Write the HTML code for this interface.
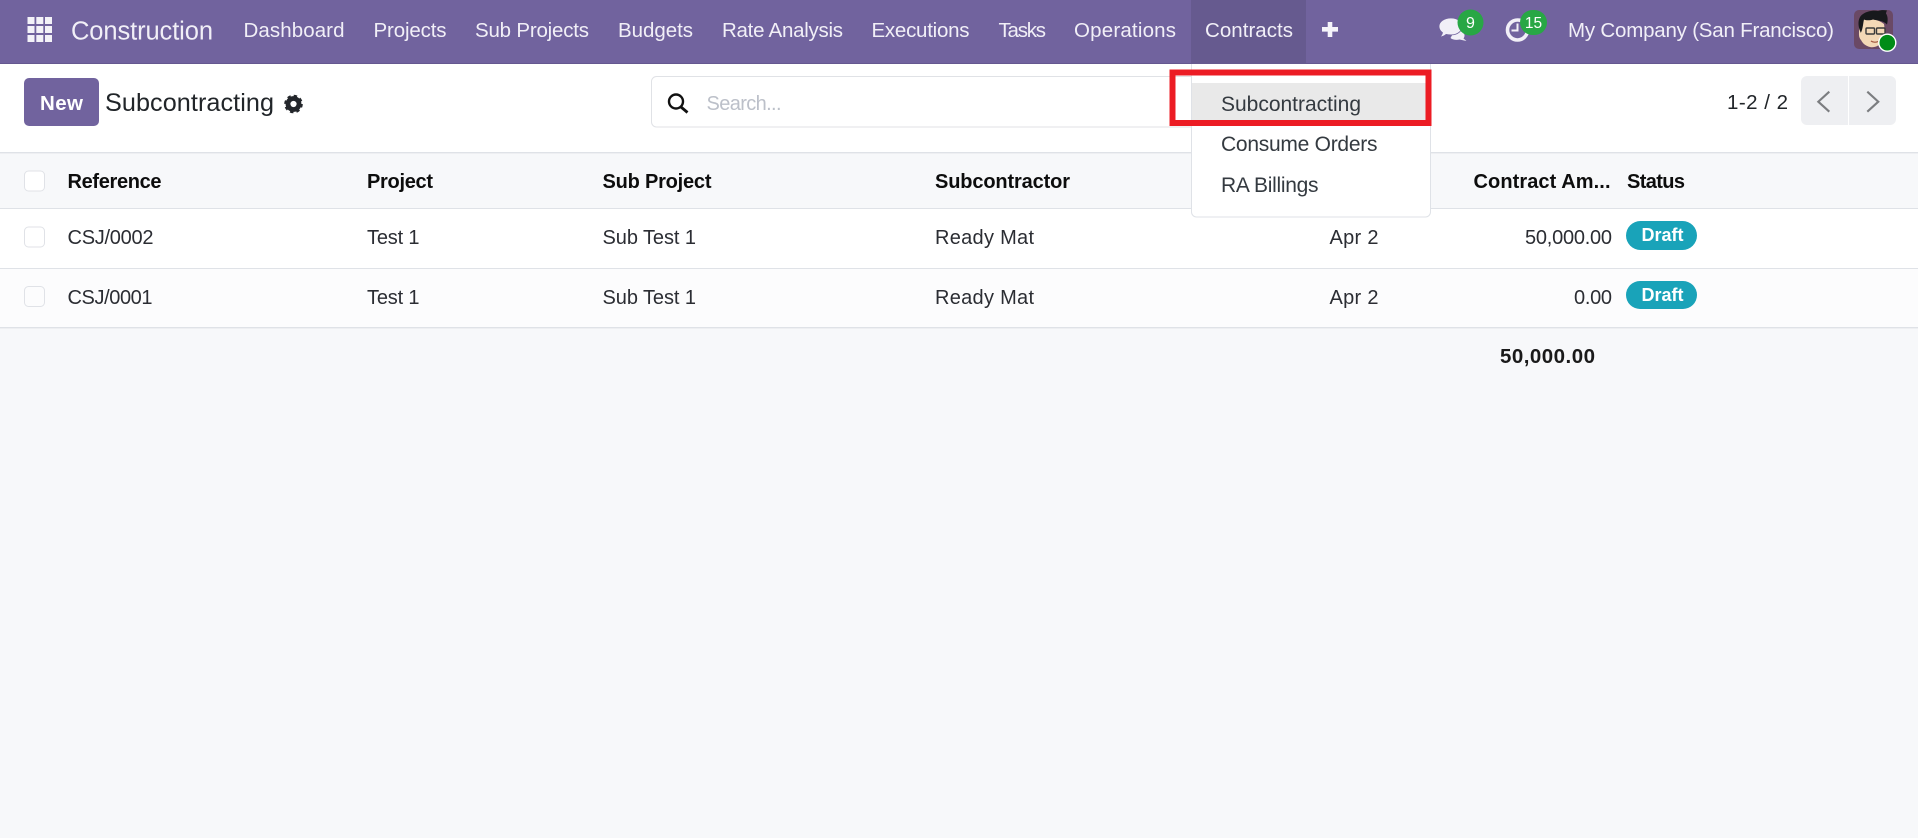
<!DOCTYPE html>
<html lang="en">
<head>
<meta charset="utf-8">
<title>Subcontracting</title>
<style>
html,body{margin:0;padding:0;width:1918px;height:838px;overflow:hidden;background:#f7f8fa}
svg{display:block}
text{font-family:"Liberation Sans",sans-serif;font-size:20px;white-space:pre}
.n{fill:#f1eff7;font-size:20.5px}
.h{font-weight:700;fill:#0d0d0d;font-size:20px}
.c{fill:#2b2d33;font-size:20px}
.d{fill:#343a40;font-size:21px}
.b{font-weight:700;fill:#fff}
</style>
</head>
<body>
<svg width="1918" height="838" viewBox="0 0 1918 838" xmlns="http://www.w3.org/2000/svg">
  <!-- page areas -->
  <rect width="1918" height="838" fill="#f7f8fa"/>
  <rect y="64" width="1918" height="89" fill="#fff"/>

  <!-- navbar -->
  <rect width="1918" height="64" fill="#71639e"/>
  <rect y="63" width="1918" height="1" fill="#655890"/>
  <rect x="1191" width="115" height="64" fill="#665a8f"/>
  <g fill="#f3f2f8">
    <rect x="27.5" y="17" width="7" height="7"/><rect x="36.300" y="17" width="7" height="7"/><rect x="45" y="17" width="7" height="7"/>
    <rect x="27.5" y="26" width="7" height="7"/><rect x="36.300" y="26" width="7" height="7"/><rect x="45" y="26" width="7" height="7"/>
    <rect x="27.5" y="35" width="7" height="7"/><rect x="36.300" y="35" width="7" height="7"/><rect x="45" y="35" width="7" height="7"/>
  </g>
  <text class="n" x="71" y="39.5" style="font-size:25.500px" textLength="142" lengthAdjust="spacing">Construction</text>
  <text class="n" x="243.5" y="37" textLength="101" lengthAdjust="spacing">Dashboard</text>
  <text class="n" x="373.5" y="37" textLength="73" lengthAdjust="spacing">Projects</text>
  <text class="n" x="475" y="37" textLength="114" lengthAdjust="spacing">Sub Projects</text>
  <text class="n" x="618" y="37" textLength="75" lengthAdjust="spacing">Budgets</text>
  <text class="n" x="722" y="37" textLength="121" lengthAdjust="spacing">Rate Analysis</text>
  <text class="n" x="871.5" y="37" textLength="98" lengthAdjust="spacing">Executions</text>
  <text class="n" x="998.5" y="37" textLength="47.5" lengthAdjust="spacing">Tasks</text>
  <text class="n" x="1074" y="37" textLength="102" lengthAdjust="spacing">Operations</text>
  <text class="n" x="1205" y="37" textLength="88" lengthAdjust="spacing">Contracts</text>
  <path d="M1330 22v15M1322 29.3h16" stroke="#f5f4fa" stroke-width="4.6" fill="none"/>

  <!-- chat icon -->
  <path d="M1455 30c4-.5 9 1.500 9.500 5 .2 1.500-.5 2.800-1 3.500l3 2.500-7-1.500c-3 .8-7 .3-9-1.500z" fill="#f1eff7"/>
  <path d="M1451 18c-7 0-12 3.800-12 8.500 0 2.500 1.400 4.700 3.500 6.200-.3 1.700-1.500 3.300-3 4.300 2.700-.2 5-1.200 6.600-2.600 1.500.3 3.200.500 4.900.500 7 0 11-4 11-8.500S1458 18 1451 18z" fill="#f1eff7" stroke="#71639e" stroke-width=".8"/>
  <circle cx="1470.500" cy="22.500" r="13" fill="#28a745"/>
  <text class="b" x="1470.500" y="28" text-anchor="middle" style="font-size:16px;font-weight:400">9</text>

  <!-- clock icon -->
  <circle cx="1517.500" cy="30" r="10" fill="none" stroke="#f1eff7" stroke-width="3.600"/>
  <path d="M1517.500 23.500V30.500H1511.500" fill="none" stroke="#f1eff7" stroke-width="2"/>
  <rect x="1520" y="10" width="27" height="25" rx="12.500" fill="#28a745"/>
  <text class="b" x="1533.500" y="28" text-anchor="middle" style="font-size:15.500px;font-weight:400">15</text>

  <text class="n" x="1568" y="37" textLength="266" lengthAdjust="spacing">My Company (San Francisco)</text>

  <!-- avatar -->
  <rect x="1854" y="10" width="39" height="39" rx="5" fill="#6a4965"/>
  <path d="M1859 35c0-8 1-15 5-17 6 1 14 1 20 6 1 6 1 13-2 18-3 4-8 6-12 5-4-1-7-3-9-7-1-1-2-3-2-5z" fill="#f3d8b6"/>
  <path d="M1861 33c-4-8-3-16 2-19 4-3 11-4 15-3 3-1 6-1 9-.500-1 2-1 3-1 3 2 3 2 7 1 11-4-4-10-4-14-5-3 1-7 1-9 0-1 4-1 9-3 13z" fill="#17191c"/>
  <g fill="none" stroke="#3a3a3a" stroke-width="1.400">
    <rect x="1866" y="28" width="8.500" height="6" rx="1"/>
    <rect x="1876.500" y="28" width="8.500" height="6" rx="1"/>
  </g>
  <path d="M1871 41c2 1.500 5 1.500 7 .5" fill="none" stroke="#a0553e" stroke-width="1.200"/>
  <circle cx="1887.300" cy="42.700" r="8.500" fill="#008c17" stroke="#fff" stroke-width="1.400"/>

  <!-- control panel -->
  <rect x="24" y="78" width="75" height="48" rx="5" fill="#71639e"/>
  <text class="b" x="40" y="110" textLength="43" lengthAdjust="spacing" style="font-size:20.500px">New</text>
  <text x="105" y="111" style="font-size:25.200px;fill:#212529" textLength="169" lengthAdjust="spacing">Subcontracting</text>
  <circle cx="293.500" cy="104" r="5.500" fill="none" stroke="#23262b" stroke-width="4.800"/>
  <circle cx="293.500" cy="104" r="8" fill="none" stroke="#23262b" stroke-width="2.600" stroke-dasharray="3.300 2.980"/>

  <!-- search -->
  <rect x="651.500" y="76.500" width="620" height="50.500" rx="5" fill="#fff" stroke="#e0e2e6"/>
  <circle cx="676" cy="101.500" r="7" fill="none" stroke="#111" stroke-width="2.400"/>
  <path d="M681 107l6.500 5.500" stroke="#111" stroke-width="2.800" fill="none"/>
  <text x="706.500" y="110" style="fill:#bcc0c9;font-size:20px" textLength="75" lengthAdjust="spacing">Search...</text>

  <!-- pager -->
  <text x="1727" y="109" style="fill:#212529;font-size:20.500px" textLength="61" lengthAdjust="spacing">1-2 / 2</text>
  <rect x="1801" y="76" width="95" height="49" rx="6" fill="#eeeff2"/>
  <rect x="1848" y="76" width="1" height="49" fill="#fff"/>
  <path d="M1829.300 91.700L1818.300 101.700L1829.300 111.700M1867.300 91.700L1878.300 101.700L1867.300 111.700" fill="none" stroke="#7b7d80" stroke-width="2.100"/>

  <!-- list header -->
  <rect y="153" width="1918" height="56" fill="#f7f8fa"/>
  <rect y="152" width="1918" height="1.400" fill="#dfe2e7"/>
  <rect y="208" width="1918" height="1.400" fill="#dfe2e7"/>
  <rect x="24.500" y="171" width="20" height="20" rx="4" fill="#fff" stroke="#e0e2e7"/>
  <text class="h" x="67.500" y="188" textLength="94" lengthAdjust="spacing">Reference</text>
  <text class="h" x="367" y="188" textLength="66" lengthAdjust="spacing">Project</text>
  <text class="h" x="602.500" y="188" textLength="109" lengthAdjust="spacing">Sub Project</text>
  <text class="h" x="935" y="188" textLength="135" lengthAdjust="spacing">Subcontractor</text>
  <text class="h" x="1473.500" y="188" textLength="137" lengthAdjust="spacing">Contract Am...</text>
  <text class="h" x="1627" y="188" textLength="58" lengthAdjust="spacing">Status</text>

  <!-- rows -->
  <rect y="209" width="1918" height="59" fill="#fff"/>
  <rect y="268" width="1918" height="1.400" fill="#dfe2e7"/>
  <rect y="269" width="1918" height="58" fill="#fcfcfd"/>
  <rect y="327" width="1918" height="1.400" fill="#dfe2e7"/>

  <rect x="24.500" y="227" width="20" height="20" rx="4" fill="#fff" stroke="#e0e2e7"/>
  <text class="c" x="67.500" y="244" textLength="86" lengthAdjust="spacing">CSJ/0002</text>
  <text class="c" x="367" y="244" textLength="52.500" lengthAdjust="spacing">Test 1</text>
  <text class="c" x="602.500" y="244" textLength="93.500" lengthAdjust="spacing">Sub Test 1</text>
  <text class="c" x="935" y="244" textLength="99" lengthAdjust="spacing">Ready Mat</text>
  <text class="c" x="1329.500" y="244" textLength="49" lengthAdjust="spacing">Apr 2</text>
  <text class="c" x="1525" y="244" textLength="87" lengthAdjust="spacing">50,000.00</text>
  <rect x="1626" y="221" width="71" height="29" rx="14.500" fill="#19a3b9"/>
  <text class="b" x="1641.500" y="241" textLength="42" lengthAdjust="spacing" style="font-size:18px">Draft</text>

  <rect x="24.500" y="286.500" width="20" height="20" rx="4" fill="#fcfcfd" stroke="#e0e2e7"/>
  <text class="c" x="67.500" y="304" textLength="85" lengthAdjust="spacing">CSJ/0001</text>
  <text class="c" x="367" y="304" textLength="52.500" lengthAdjust="spacing">Test 1</text>
  <text class="c" x="602.500" y="304" textLength="93.500" lengthAdjust="spacing">Sub Test 1</text>
  <text class="c" x="935" y="304" textLength="99" lengthAdjust="spacing">Ready Mat</text>
  <text class="c" x="1329.500" y="304" textLength="49" lengthAdjust="spacing">Apr 2</text>
  <text class="c" x="1574" y="304" textLength="38" lengthAdjust="spacing">0.00</text>
  <rect x="1626" y="281" width="71" height="28" rx="14" fill="#19a3b9"/>
  <text class="b" x="1641.500" y="301" textLength="42" lengthAdjust="spacing" style="font-size:18px">Draft</text>

  <text x="1500" y="363" style="font-weight:700;fill:#1a1a1a;font-size:20.500px" textLength="95" lengthAdjust="spacing">50,000.00</text>

  <!-- dropdown -->
  <path d="M1191.500 64V212a5 5 0 0 0 5 5H1425.500a5 5 0 0 0 5-5V64" fill="#fff" stroke="#dfe2e7"/>
  <rect x="1192" y="83" width="238" height="40" fill="#e9e9e9"/>
  <text class="d" x="1221" y="111" textLength="140" lengthAdjust="spacing">Subcontracting</text>
  <text class="d" x="1221" y="151" textLength="156.500" lengthAdjust="spacing">Consume Orders</text>
  <text class="d" x="1221" y="192" textLength="97.500" lengthAdjust="spacing">RA Billings</text>

  <!-- red annotation -->
  <rect x="1172.500" y="72.500" width="256" height="50.500" fill="none" stroke="#ec1c24" stroke-width="6"/>
</svg>
</body>
</html>
